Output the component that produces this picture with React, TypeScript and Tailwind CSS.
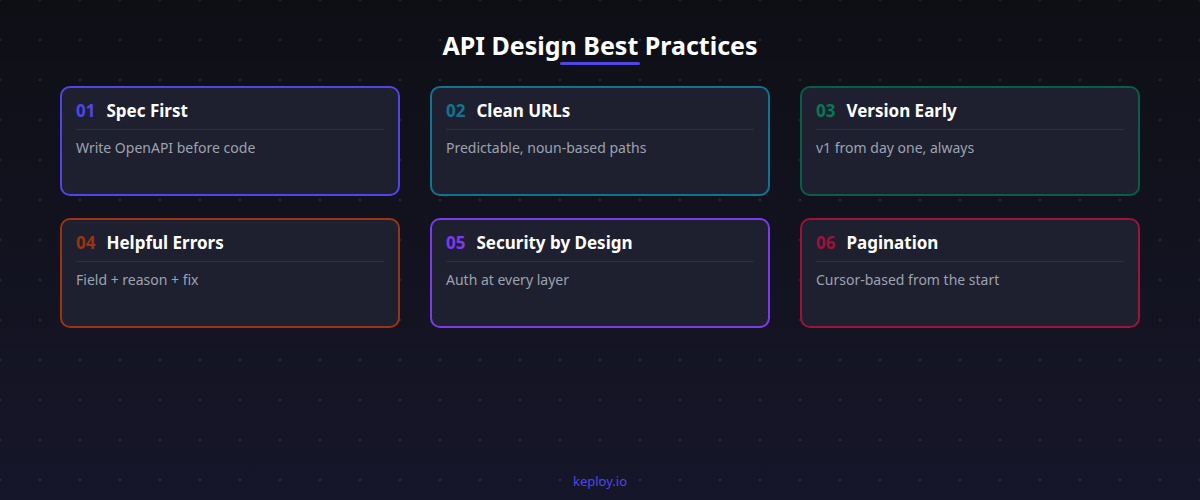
export default function App() {
  const cards = [
    { n: "01", t: "Spec First", d: "Write OpenAPI before code", num: "text-[#4f46e5]", b: "border-[#5046e5]" },
    { n: "02", t: "Clean URLs", d: "Predictable, noun-based paths", num: "text-[#0e7490]", b: "border-[#0e7490]" },
    { n: "03", t: "Version Early", d: "v1 from day one, always", num: "text-[#047857]", b: "border-[#065f46]" },
    { n: "04", t: "Helpful Errors", d: "Field + reason + fix", num: "text-[#9a3412]", b: "border-[#9a3412]" },
    { n: "05", t: "Security by Design", d: "Auth at every layer", num: "text-[#7c3aed]", b: "border-[#7c3aed]" },
    { n: "06", t: "Pagination", d: "Cursor-based from the start", num: "text-[#9f1239]", b: "border-[#9f1239]" },
  ];
  return (
    <div className="w-[1200px] h-[500px] bg-[linear-gradient(180deg,#0e0f15,#16162a)] font-['DejaVu_Sans',sans-serif] flex flex-col items-center relative">
      <div className="absolute inset-0 bg-[radial-gradient(circle,rgba(255,255,255,0.12)_1px,transparent_1.2px)] bg-[size:40px_40px] bg-[position:-20px_-20px]" />
      <div className="relative flex flex-col items-center pt-[29px]">
        <h1 className="text-white font-bold text-[25px] leading-[32px]">API Design Best Practices</h1>
        <div className="w-[80px] h-[3px] bg-[#4f46e5] rounded mt-[1px]" />
      </div>
      <div className="relative grid grid-cols-3 gap-x-[30px] gap-y-[22px] mt-[21px]">
        {cards.map((c) => (
          <div key={c.n} className={`w-[340px] h-[110px] rounded-[10px] border-2 ${c.b} bg-[#1e2030] px-[14px] pt-[11px]`}>
            <div className="flex items-center gap-[11px] text-[17px] font-bold leading-[24px]">
              <span className={c.num}>{c.n}</span>
              <span className="text-white">{c.t}</span>
            </div>
            <div className="h-px bg-[#2e3142] mt-[6px]" />
            <div className="text-[14px] text-[#9ca3af] mt-[9px] leading-[18px]">{c.d}</div>
          </div>
        ))}
      </div>
      <div className="absolute bottom-[9px] text-[13px] text-[#4f46e5]">keploy.io</div>
    </div>
  );
}
